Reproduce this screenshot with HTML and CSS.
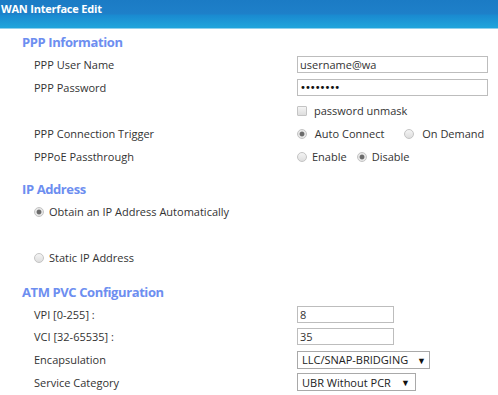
FILE: index.html
```html
<!DOCTYPE html>
<html lang="en">
<head>
    <meta charset="UTF-8">
    <title>WAN Interface Edit</title>
    <link rel="stylesheet" href="styles.css">
</head>
<body>
    <div class="title-bar">WAN Interface Edit</div>

    <div class="panel">
        <div class="section-title first">PPP Information</div>
        <div class="row">
            <span class="label">PPP User Name</span>
            <input class="text-box wide" type="text" value="username@wa">
        </div>
        <div class="row">
            <span class="label">PPP Password</span>
            <input class="text-box wide secret" type="password" value="password">
        </div>
        <div class="row">
            <span class="label"></span>
            <label class="option"><input type="checkbox" class="check">password unmask</label>
        </div>
        <div class="row">
            <span class="label">PPP Connection Trigger</span>
            <label class="option spaced"><input type="radio" name="trigger" class="radio" checked>&nbsp;Auto Connect</label>
            <label class="option"><input type="radio" name="trigger" class="radio">&nbsp;On Demand</label>
        </div>
        <div class="row">
            <span class="label">PPPoE Passthrough</span>
            <label class="option tight"><input type="radio" name="pass" class="radio">Enable</label>
            <label class="option tight"><input type="radio" name="pass" class="radio" checked>Disable</label>
        </div>

        <div class="section-title ip">IP Address</div>
        <div class="row">
            <label class="option"><input type="radio" name="ip" class="radio" checked>Obtain an IP Address Automatically</label>
        </div>
        <div class="row"></div>
        <div class="row">
            <label class="option"><input type="radio" name="ip" class="radio">Static IP Address</label>
        </div>

        <div class="section-title atm">ATM PVC Configuration</div>
        <div class="row compact">
            <span class="label">VPI [0-255] :</span>
            <input class="text-box short" type="text" value="8">
        </div>
        <div class="row compact">
            <span class="label">VCI [32-65535] :</span>
            <input class="text-box short" type="text" value="35">
        </div>
        <div class="row compact">
            <span class="label">Encapsulation</span>
            <span class="select-box encap">
                <select><option>LLC/SNAP-BRIDGING</option></select>
            </span>
        </div>
        <div class="row compact">
            <span class="label">Service Category</span>
            <span class="select-box service">
                <select><option>UBR Without PCR</option></select>
            </span>
        </div>
    </div>
</body>
</html>
```

FILE: styles.css
```css
body {
    margin: 0;
    font-family: "Open Sans", Arial, sans-serif;
    font-size: 11px;
    color: #333;
    background-color: #fff;
}
.title-bar {
    height: 28px;
    padding-left: 1px;
    font-weight: bold;
    font-size: 11px;
    line-height: 18px;
    color: #fff;
    background: linear-gradient(to bottom, #1b7bc5 0px, #1e80c9 14px, #1a8ad0 15px, #1fa3db 27px);
    border-bottom: 1px solid #8fd0ec;
    letter-spacing: -0.2px;
}
.panel {
    padding: 4px 0 0 22px;
}
.section-title {
    height: 16px;
    line-height: 16px;
    margin-bottom: 3px;
    font-size: 13px;
    font-weight: bold;
    letter-spacing: -0.4px;
    color: #6d8ef0;
}
.section-title.first {
    margin-top: 1px;
}
.section-title.ip {
    margin-top: 13px;
}
.section-title.atm {
    margin-top: 15px;
}
.row {
    display: flex;
    align-items: center;
    height: 23px;
    padding-left: 12px;
}
.row.compact {
    height: 22.67px;
}
.label {
    width: 263px;
    flex: none;
}
.text-box {
    box-sizing: border-box;
    height: 17px;
    border: 1px solid #bdbdbd;
    padding: 0 2px;
    font-family: inherit;
    font-size: 11px;
    color: #333;
    outline: none;
}
.text-box.secret {
    font-family: "DejaVu Sans", sans-serif;
    font-size: 10px;
    letter-spacing: -1px;
    color: #111;
}
.text-box.wide {
    width: 191px;
}
.text-box.short {
    width: 97px;
}
.option {
    display: inline-flex;
    align-items: center;
}
.option.spaced {
    margin-right: 20px;
}
.option.tight {
    margin-right: 10px;
}
.radio,
.check {
    appearance: none;
    margin: 0 5px 0 0;
    flex: none;
    border: 1px solid #c4c4c4;
    background: linear-gradient(to bottom, #f4f4f4, #dedede);
}
.radio {
    width: 10px;
    height: 10px;
    border-radius: 50%;
}
.radio:checked {
    background: radial-gradient(circle, #6b6b6b 0, #6b6b6b 2px, #e2e2e2 2.8px, #f0f0f0 5px);
}
.check {
    width: 10px;
    height: 10px;
    margin-right: 7px;
    border-radius: 1px;
}
.select-box {
    position: relative;
    display: inline-block;
    height: 18px;
}
.select-box select {
    appearance: none;
    box-sizing: border-box;
    height: 18px;
    border: 1px solid #a9a9a9;
    background: #fff;
    padding: 0 4px;
    font-family: inherit;
    font-size: 11px;
    color: #222;
}
.select-box::after {
    content: "\25BC";
    position: absolute;
    right: 4px;
    top: 3px;
    font-size: 9px;
    color: #111;
}
.select-box.service::after {
    right: 6px;
}
.select-box.encap select {
    width: 133px;
}
.select-box.service select {
    width: 119px;
}
```
